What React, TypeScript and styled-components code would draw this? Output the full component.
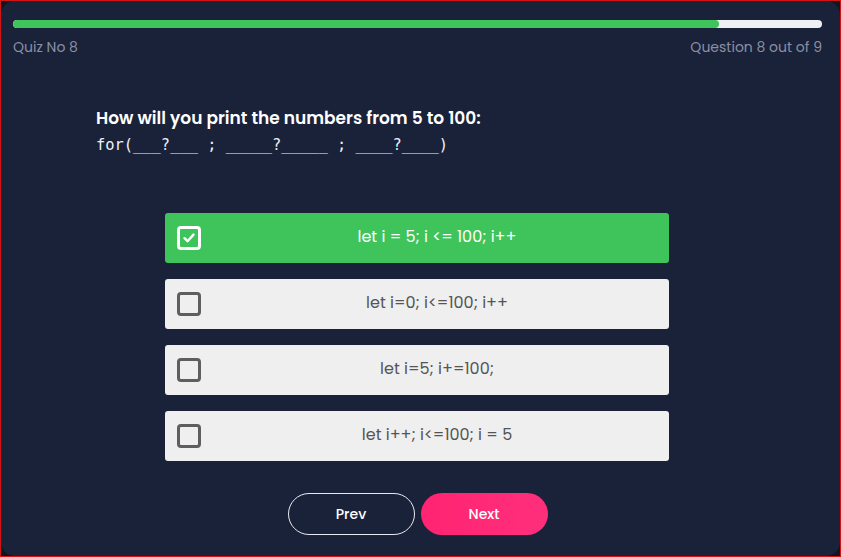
import React, { useState } from "react";
import styled, { createGlobalStyle } from "styled-components";

const Global = createGlobalStyle`
  html, body { margin: 0; padding: 0; background: #0e1322; }
  * { box-sizing: border-box; }
`;

const Frame = styled.div`
  width: 841px;
  height: 557px;
  border: 1px solid #d41414;
  background: #10151f;
  display: flex;
`;

const Card = styled.div`
  flex: 1;
  background: #1a223a;
  border-radius: 14px;
  padding: 19px 18px 0 12px;
  display: flex;
  flex-direction: column;
  font-family: "Poppins", Inter, "Noto Sans", sans-serif;
`;

const Track = styled.div`
  height: 8px;
  border-radius: 4px;
  background: #eef0f3;
  overflow: hidden;
`;

const Fill = styled.div`
  height: 100%;
  background: #3ec45a;
  border-radius: 4px;
`;

const Meta = styled.div`
  display: flex;
  justify-content: space-between;
  margin-top: 10px;
  color: #8a90a3;
  font-size: 14px;
  line-height: 18px;
`;

const Question = styled.div`
  margin: 51px 0 0 83px;
  color: #ffffff;
`;

const Title = styled.div`
  font-size: 17px;
  font-weight: 600;
  line-height: 22px;
`;

const Code = styled.div`
  font-family: "DejaVu Sans Mono", "Liberation Mono", monospace;
  font-size: 15.4px;
  line-height: 20px;
  margin-top: 6px;
  white-space: pre;
  color: #eef0f5;
`;

const Options = styled.div`
  display: flex;
  flex-direction: column;
  gap: 16px;
  width: 504px;
  margin: 58px 0 0 152px;
`;

const Option = styled.div<{ $selected: boolean }>`
  height: 50px;
  border-radius: 3px;
  display: flex;
  align-items: center;
  padding: 0 0 0 12px;
  cursor: pointer;
  background: ${(p) => (p.$selected ? "#3ec45a" : "#efefef")};
  color: ${(p) => (p.$selected ? "#ffffff" : "#555555")};
`;

const Box = styled.div<{ $selected: boolean }>`
  width: 24px;
  height: 24px;
  border-radius: 4px;
  border: 3px solid ${(p) => (p.$selected ? "#ffffff" : "#5e5e5e")};
  display: flex;
  align-items: center;
  justify-content: center;
  flex-shrink: 0;
`;

const Label = styled.div`
  flex: 1;
  margin-left: 4px;
  padding-bottom: 3px;
  text-align: center;
  font-size: 16px;
`;

const Buttons = styled.div`
  display: flex;
  justify-content: center;
  gap: 6px;
  margin-top: 32px;
`;

const Button = styled.button<{ $primary?: boolean }>`
  width: 127px;
  height: 42px;
  border-radius: 21px;
  font-family: "Poppins", Inter, "Noto Sans", sans-serif;
  font-size: 14px;
  font-weight: 500;
  color: #ffffff;
  cursor: pointer;
  border: ${(p) => (p.$primary ? "none" : "1px solid #e8eaf0")};
  background: ${(p) => (p.$primary ? "linear-gradient(90deg, #ff2472, #ff2f7c)" : "transparent")};
`;

const options = [
  "let i = 5; i <= 100; i++",
  "let i=0; i<=100; i++",
  "let i=5; i+=100;",
  "let i++; i<=100; i = 5",
];

export default function App() {
  const [sel, setSel] = useState(0);
  return (
    <>
      <Global />
      <Frame>
        <Card>
          <Track>
            <Fill style={{ width: "87.3%" }} />
          </Track>
          <Meta>
            <span>Quiz No 8</span>
            <span>Question 8 out of 9</span>
          </Meta>
          <Question>
            <Title>How will you print the numbers from 5 to 100:</Title>
            <Code>{"for(___?___ ; _____?_____ ; ____?____)"}</Code>
          </Question>
          <Options>
            {options.map((o, i) => (
              <Option key={i} $selected={sel === i} onClick={() => setSel(i)}>
                <Box $selected={sel === i}>
                  {sel === i && (
                    <svg width="14" height="14" viewBox="0 0 14 14">
                      <path d="M2.5 7.2 L5.6 10.2 L11.5 3.6" fill="none" stroke="#fff" strokeWidth="2.4" strokeLinecap="round" strokeLinejoin="round" />
                    </svg>
                  )}
                </Box>
                <Label>{o}</Label>
              </Option>
            ))}
          </Options>
          <Buttons>
            <Button>Prev</Button>
            <Button $primary>Next</Button>
          </Buttons>
        </Card>
      </Frame>
    </>
  );
}
